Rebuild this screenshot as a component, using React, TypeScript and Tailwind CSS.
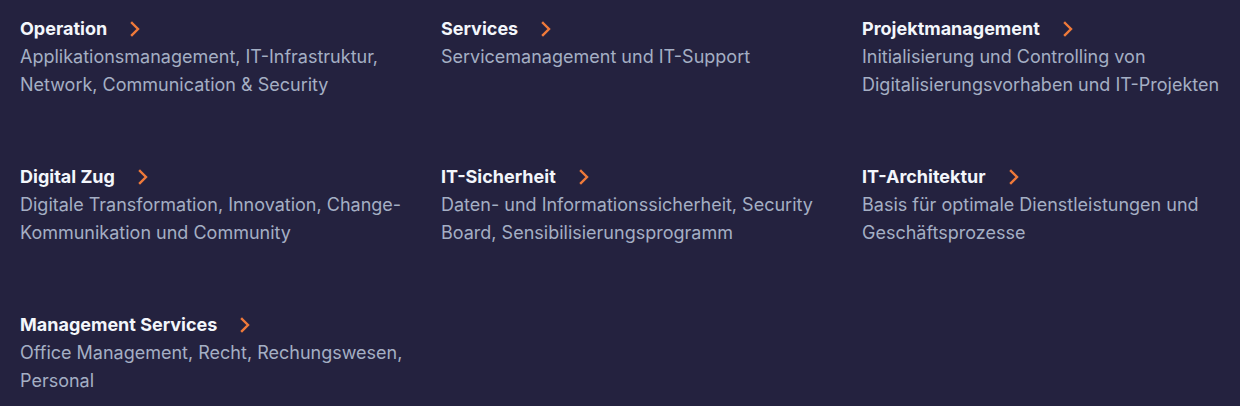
import React from 'react';

const items = [
  { title: 'Operation', text: 'Applikationsmanagement, IT-Infrastruktur, Network, Communication & Security' },
  { title: 'Services', text: 'Servicemanagement und IT-Support' },
  { title: 'Projektmanagement', text: 'Initialisierung und Controlling von Digitalisierungsvorhaben und IT-Projekten' },
  { title: 'Digital Zug', text: 'Digitale Transformation, Innovation, Change-Kommunikation und Community' },
  { title: 'IT-Sicherheit', text: 'Daten- und Informationssicherheit, Security Board, Sensibilisierungsprogramm' },
  { title: 'IT-Architektur', text: 'Basis für optimale Dienstleistungen und Geschäftsprozesse' },
  { title: 'Management Services', text: 'Office Management, Recht, Rechungswesen, Personal' },
];

const Chevron = () => (
  <svg width="11" height="16" viewBox="0 0 11 16" fill="none" className="ml-[23px] shrink-0">
    <path d="M2 2l6 6-6 6" stroke="#f07a3a" strokeWidth="2.4" strokeLinecap="square" />
  </svg>
);

export default function App() {
  return (
    <div className="w-[1240px] h-[406px] overflow-hidden bg-[#24223f] px-5 pt-[15px] font-['Inter',sans-serif]">
      <div className="grid grid-cols-[repeat(3,400px)] gap-x-[21px] gap-y-[64px]">
        {items.map((item) => (
          <a key={item.title} href="#" className="block">
            <div className="flex items-center h-7">
              <h3 className="text-[18px] font-bold text-[#f3f6fb] leading-7">{item.title}</h3>
              <Chevron />
            </div>
            <p className="text-[18px] leading-7 text-[#a4afc4] min-h-14">{item.text}</p>
          </a>
        ))}
      </div>
    </div>
  );
}
